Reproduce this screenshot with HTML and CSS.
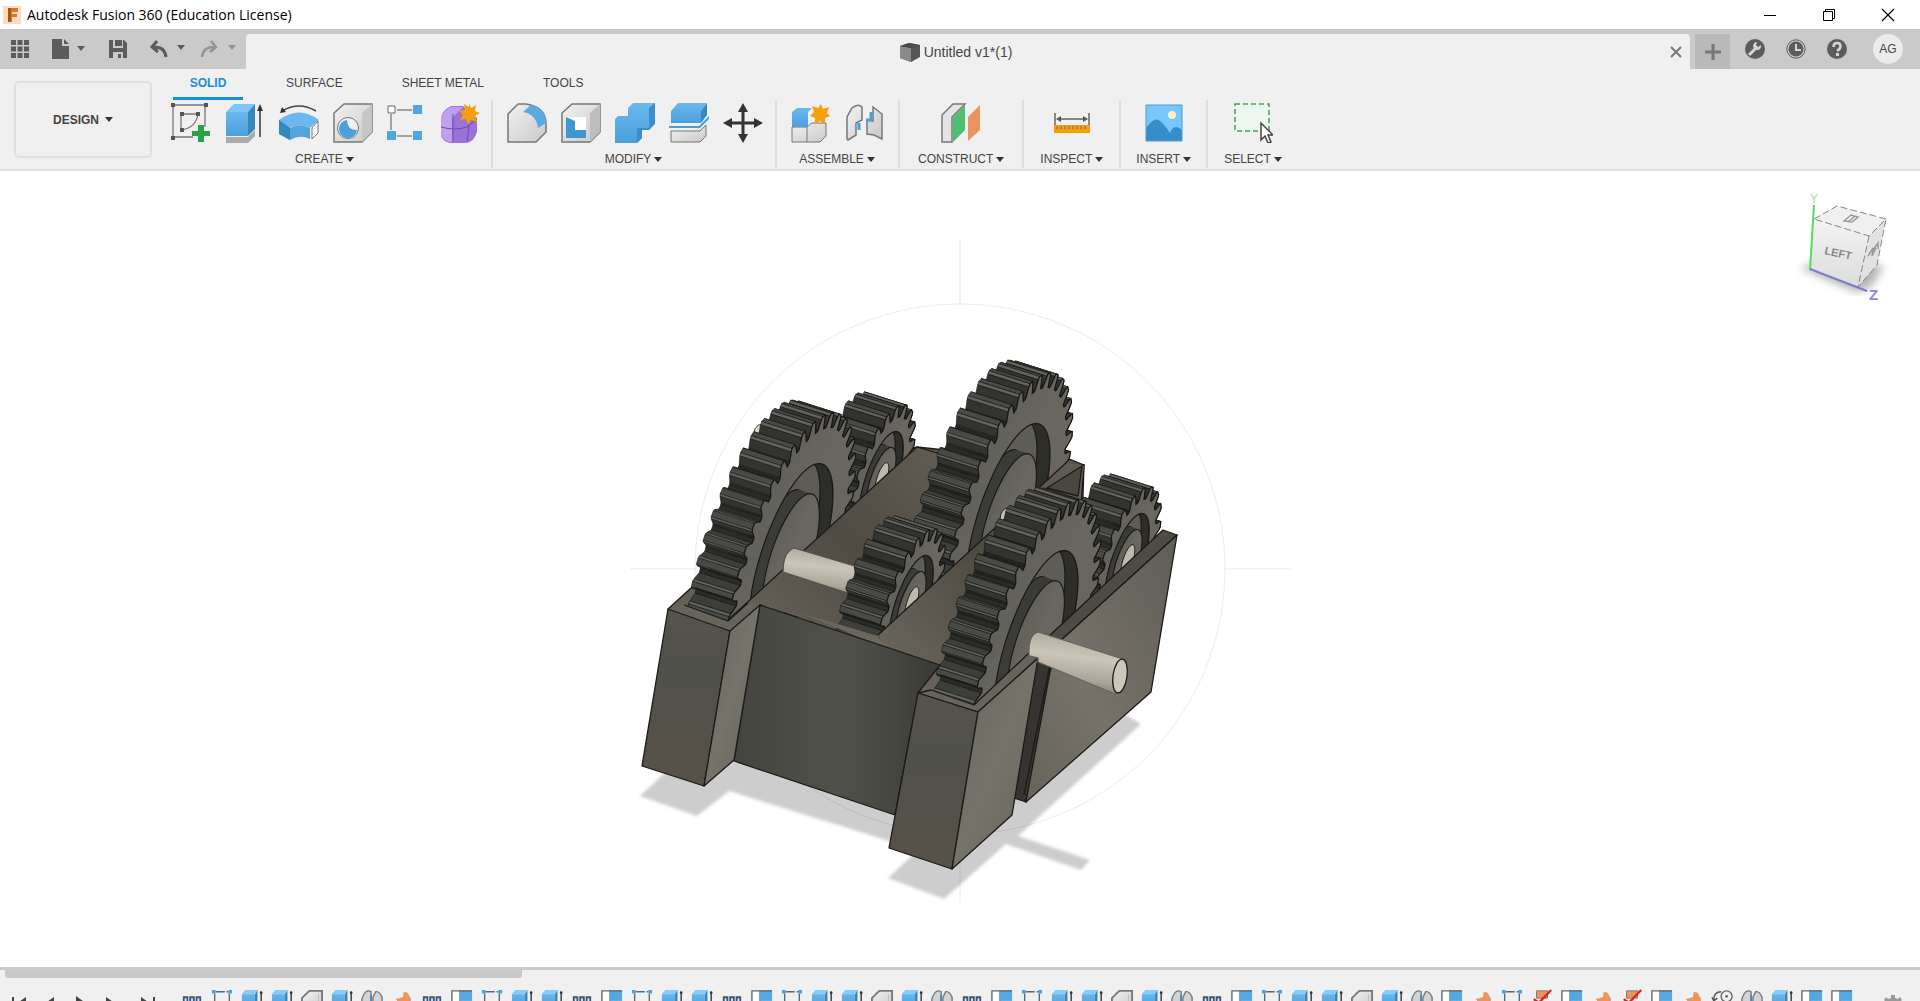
FILE: index.html
```html
<!DOCTYPE html>
<html lang="en">
<head>
<meta charset="utf-8">
<title>Autodesk Fusion 360 (Education License)</title>
<link rel="stylesheet" href="styles.css">
</head>
<body>
<svg class="defs" aria-hidden="true">
  <defs>
    <linearGradient id="gBlue" x1="0" y1="0" x2="0" y2="1"><stop offset="0" stop-color="#6cb8ee"/><stop offset="1" stop-color="#4a9fdd"/></linearGradient>
    <linearGradient id="gGrey" x1="0" y1="0" x2="1" y2="1"><stop offset="0" stop-color="#f2f2f2"/><stop offset="1" stop-color="#c9c9c9"/></linearGradient>
    <symbol id="t-dots" viewBox="0 0 24 24"><path d="M3 22V9h4v13M10 22V9h4v13M17 22V9h4v13" fill="#dfe8f2" stroke="#3c5577" stroke-width="2"/></symbol>
    <symbol id="t-sketch" viewBox="0 0 24 24"><path d="M5 3h14M4 5v15M20 5v10" stroke="#666" stroke-width="1.5" stroke-dasharray="10 2"/><path d="M1 1h4v4H1zM19 1h4v4h-4z" fill="#4a9fdd"/><path d="M18 14l6 1-3 6z" fill="#e33"/></symbol>
    <symbol id="t-ext" viewBox="0 0 24 24"><path d="M1 6l4-5h13l-3 5v18H1z" fill="url(#gBlue)"/><path d="M15 6l3-5v23h-3z" fill="#3d87bd"/><path d="M1 6l4-5h13l-3 5z" fill="#8accf7"/><path d="M22 4v20" stroke="#333" stroke-width="1.5"/><circle cx="22" cy="4" r="1.5" fill="#333"/></symbol>
    <symbol id="t-fillet" viewBox="0 0 24 24"><path d="M1 24V10l8-8h14v22z" fill="url(#gGrey)" stroke="#777" stroke-width="2"/><path d="M19 6v18" stroke="#bbb" fill="none"/></symbol>
    <symbol id="t-joint" viewBox="0 0 24 24"><path d="M1 22V11q4-12 10-8v12l-5 7zM23 22V9q-3-7-7-6l-3 6v11z" fill="#d4d4d4" stroke="#777" stroke-width="1.5"/><path d="M11 6v15l4-3" stroke="#3d8fcf" stroke-width="2" fill="none"/></symbol>
    <symbol id="t-pin" viewBox="0 0 24 24"><path d="M14 3l4 1 4 7-1 4-4 0-4 5-3-3-6 5 4-8-3-3 8-2z" fill="#ea955f"/></symbol>
    <symbol id="t-comp" viewBox="0 0 24 24"><path d="M1 24V2h9v22" fill="#fff" stroke="#666" stroke-width="1.5"/><path d="M9 2h14v11H9z" fill="#55a8e2"/><path d="M9 2h14" stroke="#666" stroke-width="1.5"/></symbol>
    <symbol id="t-break" viewBox="0 0 24 24"><path d="M6 2h12v8H6z" fill="#ea955f" stroke="#777"/><path d="M5 20q7-12 14 0z" fill="#888"/><path d="M1 23L22 1M3 11l17 12" stroke="#e22020" stroke-width="2.5"/></symbol>
    <symbol id="t-motion" viewBox="0 0 24 24"><circle cx="17" cy="8" r="6" fill="none" stroke="#666" stroke-width="1.5"/><circle cx="17" cy="8" r="1.5" fill="#666"/><path d="M3 12q0-9 8-9M1 9l2 4 4-3M1 19h16" fill="none" stroke="#555" stroke-width="1.5"/></symbol>
  </defs>
</svg>

<header class="titlebar">
  <svg class="logo" viewBox="0 0 18 18"><rect width="18" height="18" fill="#fbdcc0"/><path d="M5 2h10v4H9v2h5v3H9v5H5z" fill="#d9772b"/><path d="M5 2h3v14H5z" fill="#a85515"/></svg>
  <h1>Autodesk Fusion 360 (Education License)</h1>
  <div class="window-buttons">
    <button aria-label="Minimize"><svg width="14" height="14"><path d="M1 7.500h12" stroke="#000"/></svg></button>
    <button aria-label="Restore"><svg width="14" height="14" fill="none" stroke="#000"><path d="M1.500 3.500h9v9h-9zM3.500 3V1.500h9v9H11"/></svg></button>
    <button aria-label="Close"><svg width="14" height="14"><path d="M1 1l12 12M13 1L1 13" stroke="#000" stroke-width="1.2"/></svg></button>
  </div>
</header>

<nav class="appbar">
  <div class="quick">
    <button aria-label="Data panel"><svg width="18" height="18" fill="#5c5c5c"><path d="M0 0h5v5H0zM6.500 0h5v5h-5zM13 0h5v5h-5zM0 6.500h5v5H0zM6.500 6.500h5v5h-5zM13 6.500h5v5h-5zM0 13h5v5H0zM6.500 13h5v5h-5zM13 13h5v5h-5z"/></svg></button>
    <button aria-label="File" class="file"><svg width="34" height="20" fill="#5c5c5c"><path d="M0 0h10v7h7v13H0zM12 0l5 5h-5z"/><path d="M25 7h8l-4 5z"/></svg></button>
    <button aria-label="Save"><svg width="18" height="18"><path d="M0 0h15l3 3v15H0z" fill="#5c5c5c"/><path d="M4 0h2v6h7V0h1v8H4zM4 18v-6h10v6h-2v-4h-3v4z" fill="#cacaca"/></svg></button>
    <button aria-label="Undo" class="undo"><svg width="36" height="18"><path d="M7 1L2 7l6 5M2 7q13-1 14 10" fill="none" stroke="#5c5c5c" stroke-width="3"/><path d="M27 5h8l-4 5z" fill="#5c5c5c"/></svg></button>
    <button aria-label="Redo"><svg width="36" height="18"><path d="M10 1l5 6-6 5M15 7Q2 6 1 17" fill="none" stroke="#949494" stroke-width="2.500"/><path d="M27 5h8l-4 5z" fill="#949494"/></svg></button>
  </div>
  <div class="doc-tab">
    <svg width="20" height="20"><path d="M0 4l9-3 11 2v12l-9 5-11-4z" fill="#555"/><path d="M0 4l11 2v14L0 16z" fill="#8a8a8a"/><path d="M0 4l9-3 11 2-9 3z" fill="#4a4a4a"/></svg>
    <span>Untitled v1*(1)</span>
    <button aria-label="Close tab" class="close-tab"><svg width="12" height="12"><path d="M1 1l10 10M11 1L1 11" stroke="#777" stroke-width="2"/></svg></button>
  </div>
  <button class="new-tab" aria-label="New design"><svg width="16" height="16"><path d="M8 0v16M0 8h16" stroke="#777" stroke-width="3"/></svg></button>
  <div class="status">
    <button aria-label="Extensions"><svg width="20" height="20"><circle cx="10" cy="10" r="10" fill="#5c5c5c"/><path d="M4 16l7-7" stroke="#d5d5d5" stroke-width="3"/><path d="M16 6a4 4 0 1 1-4-3l-1 3 2 2z" fill="#d5d5d5"/></svg></button>
    <button aria-label="Job status"><svg width="20" height="20"><circle cx="10" cy="10" r="9.200" fill="none" stroke="#5c5c5c"/><circle cx="10" cy="10" r="7.500" fill="#5c5c5c"/><path d="M10 5v6h5" fill="none" stroke="#d5d5d5" stroke-width="2"/></svg></button>
    <button aria-label="Help"><svg width="20" height="20"><circle cx="10" cy="10" r="10" fill="#5c5c5c"/><path d="M6.500 8q0-4 3.500-4t3.500 3-3.500 5" fill="none" stroke="#d5d5d5" stroke-width="2.500"/><path d="M9 14h3v3H9z" fill="#d5d5d5"/></svg></button>
    <button class="avatar">AG</button>
  </div>
</nav>

<section class="ribbon">
  <button class="workspace">DESIGN <i class="caret"></i></button>
  <div class="tools">
    <div class="tabs">
      <button class="tab tab-on">SOLID</button>
      <button class="tab tab-surface">SURFACE</button>
      <button class="tab tab-sheet">SHEET METAL</button>
      <button class="tab tab-tools">TOOLS</button>
    </div>
    <div class="groups">
      <div class="group create">
        <div class="icons">
          <button aria-label="Create sketch"><svg viewBox="0 0 40 40"><path d="M4 2h30v22M2 4v30h20M10 11h15M10 11v15M10 27q15-2 17-16" fill="none" stroke="#777" stroke-width="1.300"/><path d="M0 0h4v4H0zM33 0h4v4h-4zM0 33h4v4H0zM9 9h4v4H9zM25 9h4v4h-4zM9 25h4v4H9z" fill="#555"/><path d="M27 22h6v6h6v5h-6v6h-6v-6h-6v-5h6z" fill="#2aa348"/></svg></button>
          <button aria-label="Extrude"><svg viewBox="0 0 40 40"><path d="M1 34h22l7-7v6l-7 7H1z" fill="#aaa"/><path d="M1 9h22v24H1z" fill="url(#gBlue)"/><path d="M1 9l8-8h21l-7 8z" fill="#7cc6f8"/><path d="M23 9l7-8v25l-7 7z" fill="#3687bd"/><path d="M35 34V4" stroke="#333" stroke-width="1.500"/><path d="M32 8l3-7 3 7z" fill="#333"/></svg></button>
          <button aria-label="Revolve"><svg viewBox="0 0 40 40"><path d="M0 17Q20 2 40 17l-9 8q-9-5-20 0v12L0 31z" fill="#6cb8ee"/><path d="M0 17l11 8v12L0 31z" fill="#3687bd"/><path d="M11 25q10-5 20 0v11q-10-5-20 1z" fill="#55a5dc"/><path d="M33 25l6-7v12l-6 6z" fill="#fff" stroke="#777"/><path d="M3 8Q20-2 37 8" stroke="#444" stroke-width="1.500" fill="none"/><path d="M1 10l2-6 4 5z" fill="#333"/></svg></button>
          <button aria-label="Hole"><svg viewBox="0 0 40 40"><path d="M1 10l10-9h28v28l-10 10H1z" fill="url(#gGrey)" stroke="#777" stroke-width="1.500"/><path d="M29 10L39 1v28L29 39z" fill="#c6c6c6"/><circle cx="15" cy="25" r="10.500" fill="#efefef" stroke="#777"/><path d="M14 17a9 9 0 1 0 10 10q-10 0-10-10z" fill="#4a9fdd"/></svg></button>
          <button aria-label="Pattern"><svg viewBox="0 0 40 40"><path d="M10 7h15M4 11v16M10 33h15" stroke="#888" stroke-width="1.500"/><path d="M1 3h7v7H1z" fill="#fff" stroke="#666"/><path d="M26 2h9v9h-9zM0 28h9v9H0zM26 28h9v9h-9z" fill="#4fa6e2"/></svg></button>
          <button aria-label="Create form"><svg viewBox="0 0 40 40"><path d="M0 16q0-8 10-13h12l14 12v14q-3 10-11 11H9Q0 38 0 31z" fill="#9b72d8"/><path d="M0 17q0-8 10-13h12L11 15v24Q0 38 0 31z" fill="#c09fee"/><path d="M0 24q14 4 26 0l10-8M12 11v28M27 12q2 14-1 27" fill="none" stroke="#6f4cab"/><path d="M28 0l2 5 5-3-1 6 5 2-5 3 2 6-6-2-3 5-2-6-6 1 3-5-4-4 6-1-1-6 5 3z" fill="#f5a00a"/></svg></button>
        </div>
        <button class="label">CREATE <i class="caret"></i></button>
      </div>
      <div class="group modify">
        <div class="icons">
          <button aria-label="Fillet"><svg viewBox="0 0 40 40"><path d="M1 39V11L11 1h8q20 3 20 20v8L29 39z" fill="url(#gGrey)" stroke="#777" stroke-width="1.500"/><path d="M16 9l8-7q15 4 15 18l-8 5q-2-14-15-16z" fill="#5aabe4"/></svg></button>
          <button aria-label="Shell"><svg viewBox="0 0 40 40"><path d="M1 10l10-9h28v28l-10 10H1z" fill="url(#gGrey)" stroke="#777" stroke-width="1.500"/><path d="M29 10L39 1v28L29 39z" fill="#bdbdbd"/><path d="M5 14h20v21H5z" fill="#fff"/><path d="M5 14l9 4v9h11v8H5z" fill="#3f97d2"/></svg></button>
          <button aria-label="Combine"><svg viewBox="0 0 40 40"><path d="M0 16l3-3h10V5l5-5h22v20l-6 7h-7v8l-5 5H0z" fill="url(#gBlue)"/><path d="M34 5l6-5v21l-6 6h-7v8l-5 5V25h12z" fill="#3d8fcb"/></svg></button>
          <button aria-label="Split body"><svg viewBox="0 0 40 40"><path d="M2 8l7-8h29l-6 8v12H2z" fill="url(#gBlue)"/><path d="M32 8l6-8v12l-6 8z" fill="#3687bd"/><path d="M0 23h30l10-10v3L31 25H0z" fill="#4a9fdd"/><path d="M2 28h29l6-6v11l-6 6H2z" fill="url(#gGrey)" stroke="#777"/></svg></button>
          <button aria-label="Move"><svg viewBox="0 0 40 40"><path d="M20 5v30M5 20h30" stroke="#333" stroke-width="3"/><path d="M20 0l5 9H15zM20 40l5-9H15zM0 20l9-5v10zM40 20l-9-5v10z" fill="#333"/></svg></button>
        </div>
        <button class="label">MODIFY <i class="caret"></i></button>
      </div>
      <div class="group assemble">
        <div class="icons">
          <button aria-label="New component"><svg viewBox="0 0 40 40"><path d="M2 24h15l5-4h14v13l-6 6H2z" fill="url(#gGrey)" stroke="#777"/><path d="M17 24v15" stroke="#777"/><path d="M2 9l5-4h15l-4 4v15H2z" fill="url(#gBlue)"/><path d="M31 1l2 5 6-2-2 6 3 3-5 2v6l-5-3-5 3v-6l-5-2 4-4-2-6 6 2z" fill="#f5a00a"/></svg></button>
          <button aria-label="Joint"><svg viewBox="0 0 40 40"><path d="M3 36V14L8 5q6-5 10-1v13l-6 3v12l-8 5zM38 36V11l-9-7v14l-6-1v14l7 1z" fill="url(#gGrey)" stroke="#777" stroke-width="1.500"/><path d="M15 20v7M22 17h5V9" stroke="#4a9fdd" stroke-width="3" fill="none"/></svg></button>
        </div>
        <button class="label">ASSEMBLE <i class="caret"></i></button>
      </div>
      <div class="group construct">
        <div class="icons"><button aria-label="Offset plane"><svg viewBox="0 0 40 40"><path d="M1 39V12L12 1h12L11 14v25z" fill="#e4e4e4" stroke="#777" stroke-width="1.500"/><path d="M12 14L24 2v25L12 39z" fill="#4bbf72"/><path d="M27 14L39 2v25L27 38z" fill="#ea9561"/></svg></button></div>
        <button class="label">CONSTRUCT <i class="caret"></i></button>
      </div>
      <div class="group inspect">
        <div class="icons"><button aria-label="Measure"><svg viewBox="0 0 40 40"><path d="M3 10v12M37 10v12M6 16h28" stroke="#666" stroke-width="1.500"/><path d="M4 16l5-3v6zM36 16l-5-3v6z" fill="#555"/><path d="M2 22h36v8H2z" fill="#f5a00a"/><path d="M5 23v3M9 23v3M13 23v3M17 23v3M21 23v3M25 23v3M29 23v3M33 23v3" stroke="#765"/></svg></button></div>
        <button class="label">INSPECT <i class="caret"></i></button>
      </div>
      <div class="group insert">
        <div class="icons"><button aria-label="Insert canvas"><svg viewBox="0 0 40 40"><path d="M2 2h36v36H2z" fill="#78c6fb"/><path d="M2 25q9-12 14-7 5 4 10 12 4-10 12-3v11H2z" fill="#378dca"/><circle cx="28" cy="12" r="4" fill="#fff3c4"/><path d="M2 2h36v36H2z" fill="none" stroke="#4f9bd0"/></svg></button></div>
        <button class="label">INSERT <i class="caret"></i></button>
      </div>
      <div class="group select">
        <div class="icons"><button aria-label="Select"><svg viewBox="0 0 40 40"><path d="M2 1h34v27H2z" fill="#edf7ef" stroke="#3aa75a" stroke-width="1.500" stroke-dasharray="5 3"/><path d="M28 20v17l4-4 3 7 3-1-3-7h5z" fill="#fff" stroke="#444" stroke-width="1.500"/></svg></button></div>
        <button class="label">SELECT <i class="caret"></i></button>
      </div>
    </div>
  </div>
</section>

<main class="canvas">
  <svg class="model" id="model" viewBox="0 171 1920 796" role="img" aria-label="Gearbox model">
    <defs>
      <linearGradient id="front" x1="0" y1="0" x2="0" y2="1"><stop offset="0" stop-color="#55534c"/><stop offset=".35" stop-color="#50504a"/><stop offset="1" stop-color="#575148"/></linearGradient>
      <linearGradient id="mid" x1="0" y1="0" x2="1" y2="0"><stop offset="0" stop-color="#44443f"/><stop offset=".5" stop-color="#51514b"/><stop offset=".8" stop-color="#45453f"/><stop offset="1" stop-color="#393833"/></linearGradient>
      <linearGradient id="side" x1="0" y1="0" x2="1" y2="1"><stop offset="0" stop-color="#66635c"/><stop offset=".5" stop-color="#76736b"/><stop offset="1" stop-color="#66635b"/></linearGradient>
      <linearGradient id="plate" x1="1" y1="0" x2="0" y2="1"><stop offset="0" stop-color="#605d56"/><stop offset=".6" stop-color="#76726a"/><stop offset="1" stop-color="#66635b"/></linearGradient>
      <linearGradient id="top" x1="1" y1="0" x2="0" y2="1"><stop offset="0" stop-color="#625d55"/><stop offset=".45" stop-color="#4f4a42"/><stop offset="1" stop-color="#706b61"/></linearGradient>
      <linearGradient id="face" x1="0" y1="0" x2="1" y2="1"><stop offset="0" stop-color="#555551"/><stop offset=".5" stop-color="#6a6760"/><stop offset="1" stop-color="#605f59"/></linearGradient>
      <linearGradient id="rod" x1=".6" y1="0" x2=".4" y2="1"><stop offset="0" stop-color="#a8a498"/><stop offset=".4" stop-color="#cbc6b8"/><stop offset=".75" stop-color="#aaa598"/><stop offset="1" stop-color="#777369"/></linearGradient>
      <filter id="soft"><feGaussianBlur stdDeviation="1.500"/></filter>
    </defs>
    <path filter="url(#soft)" fill="#cdcdcd" d="M640 796L700 740 1100 700 1141 724 1018 836 1090 860 1081 870 1006 844 944 899 888 878 918 850 729 791 697 816z"/>
    <g fill="none" stroke="#000" stroke-opacity=".08"><circle cx="960" cy="569" r="265"/><path d="M960 240v64M960 834v68M630 569h66M1225 569h66"/></g>
    <g class="edge">
      <path fill="url(#top)" d="M668 609L815 475l102-28 167 18-2 60-30 120-112 27-180-68-30 26z"/>
      <path fill="#66635c" d="M1045 490l39-25-3 40-30 30z"/>
      <path fill="#55514a" d="M1030 487l37-29 17 7-42 40z"/>
    </g>
    <path d="M753 440q0-15 9-16l-2 14z" fill="#ddd8bd" stroke="#444"/>
    <g data-gear="881,481,53,20"></g>
    <g data-gear="791,557,100,38"></g>
    <g class="edge">
      <path fill="url(#top)" stroke="none" d="M728 620L917 447l27 9-10 80 20 125-14 3-180-60-30 26z"/>
      <path fill="none" d="M728 620L917 447l27 8"/>
      <path fill="url(#rod)" stroke="#55524b" d="M794 548l74 22-8 27-77-25q0-20 11-24z"/>
    </g>
    <g data-gear="1008,517,100,38"></g>
    <path d="M1000 521q0-14 10-13l-4 12z" fill="#c9c4b5" stroke="#222"/>
    <g data-gear="911,605,53,20"></g>
    <g class="edge">
      <path fill="url(#top)" stroke="none" d="M878 635L1067 462l17 4-25 175-70 50-71 3 21-29-54-19z"/>
      <path fill="none" d="M878 635L1067 462"/>
      <path fill="#6b675e" stroke="none" d="M800 613l41 12 37 11 8 12z"/>
      <path fill="#4a4740" d="M1047 488l35-22-4 30z"/>
    </g>
    <g data-gear="1127,563,53,20"></g>
    <g data-gear="1036,644,100,38"></g>
    <g class="edge">
      <path fill="url(#mid)" d="M760 605l180 60-22 28-23 122-161-54z"/>
      <path fill="#67645c" d="M668 609l16-4 44 16 20-17 12 0-30 27z" stroke="none"/>
      <path fill="none" d="M684 605l44 16L748 603"/>
      <path fill="url(#front)" d="M668 609l62 22-26 155-62-20z"/>
      <path fill="url(#side)" d="M730 631l30-26-26 155-30 26z"/>
      <path fill="#353431" d="M1036 655l25-15-6 30-29 132-12-4z"/>
      <path fill="#4e4b45" d="M1047 638L1163 530l14 5L1058 643z"/>
      <path fill="url(#plate)" d="M1058 643L1177 535l-26 157-125 110 24-130z"/>
      <path fill="none" d="M1050 665l-26 130"/>
      <path fill="#68645b" d="M918 693l13-3 43 15 55-52 9 5-60 54z"/>
      <path fill="url(#front)" d="M918 693l60 19-26 157-63-21z"/>
      <path fill="url(#side)" d="M978 712l60-54-26 157-60 54z"/>
      <path fill="url(#rod)" stroke="#66635a" d="M1038 632q-10 2-9 24l9 2v4l77 32q12-10 11-34z"/>
      <ellipse cx="1120" cy="676" rx="7" ry="17" transform="rotate(8 1120 676)" fill="#cbc7b9"/>
    </g>
  </svg>
  <svg class="viewcube" viewBox="1790 185 110 125" role="img" aria-label="View cube">
    <defs><linearGradient id="cube" x1="0" y1="0" x2="0" y2="1"><stop offset="0" stop-color="#f3f3f3"/><stop offset="1" stop-color="#dcdcdc"/></linearGradient><filter id="haze"><feGaussianBlur stdDeviation="4"/></filter></defs>
    <path d="M1800 268l30-10 54 8-14 22-14 4z" fill="#b4b4b4" filter="url(#haze)"/>
    <path d="M1814 219l23-13 49 13-17 17z" fill="#f0f0f0"/>
    <path d="M1814 219l55 17-11 51-48-18z" fill="url(#cube)"/>
    <path d="M1869 236l17-17-9 46-19 22z" fill="#e2e2e2"/>
    <path d="M1814 219l23-13 49 13-17 17zM1869 236l-11 51 19-22 9-46" fill="none" stroke="#888" stroke-dasharray="7 3"/>
    <path d="M1844 221l7-6 7 2-6 5zM1848 222l7-6M1868 256l5-8-1 8 4-8M1873 250l5-7v6" fill="none" stroke="#999" stroke-width="1.500"/>
    <path d="M1810 270l4-65" stroke="#55dd5a" stroke-width="2"/><path d="M1810 269l57 22" stroke="#7b7bd0" stroke-width="2"/>
    <text x="1824" y="254" transform="rotate(12 1824 254)" class="cube-face">LEFT</text>
    <text x="1810" y="203" class="axis-y">Y</text>
    <text x="1869" y="300" class="axis-z">Z</text>
  </svg>
</main>

<footer class="timeline">
  <div class="scroll"><div class="thumb"></div></div>
  <div class="track">
    <div class="playback">
      <button aria-label="Go to start"><svg width="18" height="18" fill="#444"><path d="M1 2h2v14H1zM15 2v14L5 9z"/></svg></button>
      <button aria-label="Step back"><svg width="18" height="18" fill="#444"><path d="M13 2v14L3 9z"/></svg></button>
      <button aria-label="Play"><svg width="18" height="18" fill="#444"><path d="M5 1v16L16 9z"/></svg></button>
      <button aria-label="Step forward"><svg width="18" height="18" fill="#444"><path d="M5 2v14L15 9z"/></svg></button>
      <button aria-label="Go to end"><svg width="18" height="18" fill="#444"><path d="M3 2v14L13 9zM15 2h2v14h-2z"/></svg></button>
    </div>
    <div class="features" id="features"></div>
    <button class="settings" aria-label="Timeline settings"><svg width="18" height="18"><path d="M7 0h4v3l3 1 2-2 2 3-2 2v4l2 2-3 3-4-2H7l-4 2-3-3 2-2V7L0 5l2-3 2 2 3-1z" fill="#999"/></svg></button>
  </div>
</footer>
<script src="model.js"></script>
</body>
</html>
```
FILE: styles.css
```css
* { box-sizing: border-box; }
body {
  margin: 0;
  height: 100vh;
  display: flex;
  flex-direction: column;
  overflow: hidden;
  background: #fff;
  font-family: "Liberation Sans", Arial, sans-serif;
  font-size: 12px;
  color: #444;
}
button {
  border: 0;
  padding: 0;
  background: none;
  font: inherit;
  color: inherit;
  display: inline-flex;
  align-items: center;
  justify-content: center;
}
svg { display: block; flex: none; }
.defs { position: absolute; width: 0; height: 0; }

.titlebar { flex: none; height: 29px; display: flex; align-items: center; padding-left: 3px; }
.logo { width: 18px; height: 18px; }
.titlebar h1 {
  margin: 0 auto 0 6px;
  font: 400 14px/20px "Open Sans", "Noto Sans", sans-serif;
  color: #000;
}
.window-buttons { display: flex; padding-right: 3px; }
.window-buttons button { width: 59px; height: 28px; }

.appbar { flex: none; height: 40px; display: flex; align-items: flex-end; background: #cacaca; }
.quick { width: 246px; height: 40px; display: flex; align-items: center; padding-left: 11px; }
.quick .file { margin: 0 23px; }
.quick .undo { margin: 0 15px 0 23px; }
.doc-tab {
  flex: 1;
  height: 35px;
  display: flex;
  align-items: center;
  justify-content: center;
  gap: 4px;
  padding-left: 8px;
  background: #f0f0f0;
  border-radius: 4px 4px 0 0;
  font-size: 14px;
}
.doc-tab span { margin-right: auto; }
.doc-tab > svg { margin-left: auto; }
.close-tab { width: 28px; height: 28px; }
.new-tab { width: 35px; height: 35px; margin-left: 5px; background: #b9b9b9; }
.status { height: 40px; display: flex; align-items: center; gap: 21px; padding: 0 17px 0 15px; }
.status .avatar {
  width: 30px;
  height: 30px;
  margin-left: 5px;
  border-radius: 50%;
  background: #ececec;
  font-size: 12px;
}

.ribbon { flex: none; height: 102px; display: flex; background: #f0f0f0; border-bottom: 2px solid #e0e0e0; }
.workspace {
  width: 138px;
  height: 77px;
  margin: 12px 0 0 14px;
  border: 2px solid #e0e0e0;
  border-radius: 5px;
  font-weight: 700;
  gap: 6px;
}
.caret { border: 4px solid transparent; border-top: 5px solid #333; border-bottom: 0; }
.tools { padding-left: 12px; }
.tabs { display: flex; height: 31px; padding-left: 9px; }
.tab { height: 31px; padding-bottom: 4px; }
.tab-on { width: 70px; color: #178fd8; font-weight: 700; border-bottom: 3px solid #178fd8; padding-bottom: 1px; }
.tab-surface { margin-left: 43px; }
.tab-sheet { margin-left: 59px; }
.tab-tools { margin-left: 59px; }
.groups { display: flex; height: 68px; }
.group {
  display: flex;
  flex-direction: column;
  align-items: center;
  justify-content: space-between;
  border-right: 2px solid #dedede;
}
.create { padding-right: 3px; }
.modify { padding: 0 5px 0 7px; }
.assemble { padding: 0 7px 0 6px; }
.construct { padding: 0 18px; }
.inspect { padding: 0 16px; }
.insert { padding: 0 15px; }
.select { padding: 0 16px; border: 0; }
.icons { display: flex; padding-top: 2px; }
.icons button { width: 54px; height: 42px; }
.icons svg { width: 40px; height: 40px; }
.label { height: 18px; gap: 3px; white-space: nowrap; }
.create .label, .modify .label { margin-right: 3px; }

.canvas { flex: 1; min-height: 0; position: relative; background: #fff; }
.model { width: 100%; height: 100%; }
.edge { stroke: #1b1a18; stroke-width: 1.3; stroke-linejoin: round; }
.viewcube { position: absolute; top: 14px; right: 20px; width: 110px; height: 125px; }
.cube-face { font-size: 11px; font-weight: 700; fill: #888; }
.axis-y { font-size: 12px; fill: #8be88d; }
.axis-z { font-size: 15px; font-weight: 700; fill: #8787dc; }

.timeline { flex: none; height: 34px; overflow: hidden; background: #f0f0f0; border-top: 3px solid #cacaca; }
.scroll { height: 8px; padding-left: 5px; }
.thumb { width: 27%; height: 8px; background: #c8c8c8; border-radius: 0 0 3px 3px; }
.track { display: flex; align-items: flex-start; padding: 10px 18px 0 5px; }
.playback { display: flex; width: 172px; padding-top: 7px; }
.playback button { width: 30px; }
.playback button:last-child { margin-left: 7px; }
.features { display: flex; flex: 1; }
.features button { width: 30px; height: 24px; flex: none; }
.features svg { width: 22px; height: 22px; }
.settings { padding-top: 7px; }
```
FILE: model.js
```js
const NS = "http://www.w3.org/2000/svg";

function add(parent, tag, attrs) {
  const node = document.createElementNS(NS, tag);
  for (const key in attrs) node.setAttribute(key, attrs[key]);
  parent.appendChild(node);
  return node;
}

// Gear plane axes (depth and up) for a unit gear, and the gear's thickness.
const U = [60, -50], W = [24, -135], E = [-41, -13];
const TOOTH = [[0, 0.9], [0.2, 0.9], [0.36, 0.98], [0.44, 1], [0.7, 1], [0.78, 0.98], [0.92, 0.91]];
const SHADE = ["#2b2c2a", "#3c3e3a", "#62635e", "#484a45", "#62635e", "#333431", "#262724"];

document.querySelectorAll("[data-gear]").forEach((g, index) => {
  const [cx, cy, size, teeth] = g.dataset.gear.split(",").map(Number);
  const s = size / 100;
  const at = (t, r, dx = 0, dy = 0) => [
    cx + dx + s * r * (U[0] * Math.cos(t) + W[0] * Math.sin(t)),
    cy + dy + s * r * (U[1] * Math.cos(t) + W[1] * Math.sin(t))
  ];
  const path = pts => "M" + pts.map(p => p[0].toFixed(1) + " " + p[1].toFixed(1)).join("L") + "Z";
  const ring = (r, dx = 0, dy = 0) => path(Array.from({ length: 60 }, (_, i) => at(i * Math.PI / 30, r, dx, dy)));

  const outline = [];
  for (let i = 0; i < teeth; i++)
    TOOTH.forEach(([f, r], k) => {
      const rr = s < 1 ? 1 - (1 - r) * 1.6 : r;
      outline.push({ t: (i + f) / teeth * 2 * Math.PI, r: rr, k });
    });

  const facets = outline.map((a, i) => {
    const b = outline[(i + 1) % outline.length];
    return { a, b, far: Math.cos(a.t) };
  }).sort((p, q) => q.far - p.far);

  facets.forEach(({ a, b }) => add(g, "path", {
    d: path([at(a.t, a.r), at(b.t, b.r), at(b.t, b.r, E[0], E[1]), at(a.t, a.r, E[0], E[1])]),
    fill: SHADE[a.k], stroke: "#151513", "stroke-width": 0.6
  }));

  add(g, "path", { d: path(outline.map(p => at(p.t, p.r))), fill: "url(#face)", stroke: "#151513", "stroke-width": 1.2 });

  const clip = add(g, "clipPath", { id: "recess" + index });
  add(clip, "path", { d: ring(0.65) });
  const inner = add(g, "g", { "clip-path": "url(#recess" + index + ")", stroke: "#1b1a18", "stroke-width": 1.2 });
  const dx = s < 1 ? -8 : -13, dy = s < 1 ? -3 : -4;
  add(inner, "path", { d: ring(0.65), fill: "#2d2d2a" });
  add(inner, "path", { d: ring(0.65, dx, dy), fill: "#5d5c56" });
  for (let k = 10; k >= 0; k--)
    add(inner, "path", { d: ring(0.44, dx * k / 10, dy * k / 10), fill: "#3c3c38", stroke: k === 10 ? "#1b1a18" : "none" });
  add(inner, "path", { d: ring(0.44), fill: "url(#face)" });
  add(g, "path", { d: ring(0.65), fill: "none", stroke: "#1b1a18", "stroke-width": 1.2 });
  if (s < 1) add(g, "path", { d: ring(0.2, 1, -3), fill: "#bdb9ac", stroke: "#1b1a18" });
});

const unit = "comp sketch ext ext fillet ext joint dots ";
const steps = ("dots sketch ext ext fillet ext joint pin dots comp sketch ext ext dots comp sketch ext ext dots " +
  unit + unit + "comp sketch ext ext fillet ext joint comp pin sketch break comp pin break comp pin motion joint ext comp comp").split(" ");
const bar = document.getElementById("features");
steps.forEach(name => {
  const button = document.createElement("button");
  button.setAttribute("aria-label", name);
  add(add(button, "svg", {}), "use", { href: "#t-" + name });
  bar.appendChild(button);
});
```
